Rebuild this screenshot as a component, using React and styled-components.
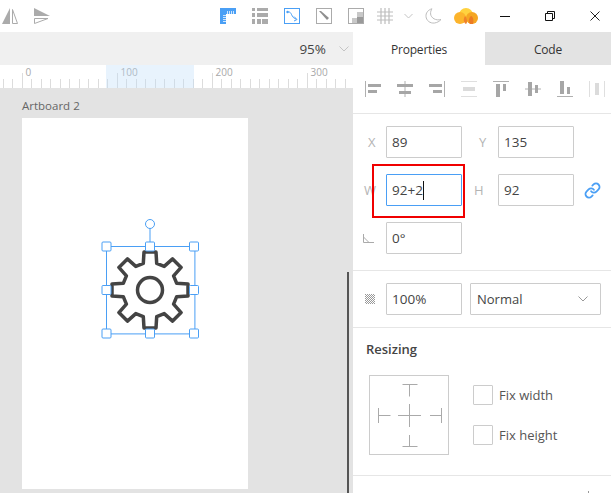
import React from "react";
import styled, { createGlobalStyle } from "styled-components";
import { Link as LinkIcon } from "lucide-react";

const BLUE = "#4a9ff5";
const GREY = "#ababab";

const GlobalStyle = createGlobalStyle`
  html, body {
    margin: 0;
    padding: 0;
    background: #fff;
    overflow: hidden;
  }
  * {
    box-sizing: border-box;
  }
`;

const Page = styled.div`
  width: 611px;
  height: 493px;
  display: flex;
  flex-direction: column;
  overflow: hidden;
  font-family: "Open Sans", "Noto Sans", sans-serif;
  font-size: 13px;
  color: #444;
  background: #fff;
`;

const Toolbar = styled.header`
  height: 32px;
  flex: none;
  display: flex;
  align-items: center;
  padding-left: 2px;
`;

const ToolIcon = styled.svg`
  display: block;
  flex: none;
  width: ${(p) => p.$w || 16}px;
  height: 16px;
  margin-left: ${(p) => p.$gap || 0}px;
`;

const Body = styled.div`
  flex: 1;
  display: flex;
  min-height: 0;
`;

const LeftColumn = styled.main`
  width: 353px;
  flex: none;
  display: flex;
  flex-direction: column;
`;

const ZoomBar = styled.div`
  height: 33px;
  flex: none;
  background: #f0f0f0;
  display: flex;
  align-items: center;
  justify-content: flex-end;
  padding-right: 4px;
  color: #444;
  font-size: 13.5px;
`;

const ZoomChevron = styled.svg`
  width: 10px;
  height: 6px;
  margin-left: 13px;
`;

const Ruler = styled.div`
  position: relative;
  height: 23px;
  flex: none;
  background: #fff;
  overflow: hidden;
  display: flex;
  align-items: flex-end;
  padding-left: 2.5px;
`;

const RulerSelection = styled.div`
  position: absolute;
  left: 106px;
  top: 0;
  bottom: 0;
  width: 88px;
  background: rgba(190, 220, 250, 0.35);
`;

const TickSlot = styled.div`
  position: relative;
  width: 9.5px;
  flex: none;
  height: ${(p) => (p.$major ? 15 : 9)}px;
  border-left: 1.5px solid #dcdcdc;
`;

const TickLabel = styled.span`
  position: absolute;
  left: 3px;
  top: -8px;
  font-size: 10px;
  line-height: 14px;
  color: #a8a8a8;
`;

const Canvas = styled.div`
  position: relative;
  flex: 1;
  background: #e3e3e3;
  padding: 10px 0 4px 22px;
  display: flex;
  flex-direction: column;
  min-height: 0;
`;

const ArtboardTitle = styled.div`
  font-size: 11.5px;
  line-height: 16px;
  color: #666;
  margin-bottom: 4px;
`;

const Artboard = styled.div`
  position: relative;
  width: 226px;
  flex: 1;
  background: #fff;
`;

const SelectionSvg = styled.svg`
  position: absolute;
  left: 78px;
  top: 100px;
`;

const Scrollbar = styled.div`
  position: absolute;
  left: 347px;
  top: 184px;
  bottom: 0;
  width: 2px;
  background: #555;
`;

const Panel = styled.aside`
  flex: 1;
  display: flex;
  flex-direction: column;
  background: #fff;
`;

const Tabs = styled.div`
  height: 33px;
  flex: none;
  display: flex;
`;

const Tab = styled.div`
  width: ${(p) => p.$w}px;
  display: flex;
  align-items: center;
  justify-content: center;
  padding-top: 1px;
  font-size: 12px;
  font-weight: 500;
  letter-spacing: -0.2px;
  color: #333;
  background: ${(p) => (p.$active ? "#fff" : "#e3e3e3")};
`;

const AlignRow = styled.div`
  height: 49px;
  flex: none;
  display: flex;
  align-items: center;
  gap: 16px;
  padding-left: 12px;
  border-bottom: 1px solid #e6e6e6;
`;

const AlignSvg = styled.svg`
  flex: none;
  width: 16px;
  height: 16px;
  opacity: ${(p) => (p.$faint ? 0.4 : 1)};
`;

const Section = styled.section`
  flex: none;
  padding: ${(p) => p.$pad};
  border-bottom: 1px solid #e6e6e6;
`;

const FieldGrid = styled.div`
  display: flex;
  flex-direction: column;
  gap: 16px;
`;

const FieldRow = styled.div`
  display: flex;
  align-items: center;
`;

const FieldLabel = styled.span`
  width: ${(p) => p.$w || 18}px;
  flex: none;
  padding-left: ${(p) => p.$pad || 0}px;
  margin-left: ${(p) => p.$shift || 0}px;
  font-size: 13px;
  color: #b4b4b4;
`;

const FieldBox = styled.div`
  position: relative;
  width: ${(p) => p.$w || 76}px;
  height: 32px;
  flex: none;
  display: flex;
  align-items: center;
  padding-left: 5px;
  font-size: 13.5px;
  color: #444;
  border: 1px solid ${(p) => (p.$focus ? BLUE : "#ccc")};
  border-radius: 1px;
`;

const Caret = styled.span`
  display: inline-block;
  width: 1px;
  height: 19px;
  background: #111;
`;

const RedFrame = styled.div`
  position: absolute;
  left: -15px;
  right: -4px;
  top: -11px;
  bottom: -13px;
  border: 2px solid #f00000;
`;

const LinkWrap = styled.div`
  margin-left: 10px;
  display: flex;
  color: ${BLUE};
`;

const AngleIcon = styled.svg`
  display: block;
  width: 11px;
  height: 9px;
  margin-left: -5px;
`;

const OpacityIcon = styled.svg`
  flex: none;
  width: 10px;
  height: 10px;
  margin-right: 11px;
`;

const SelectBox = styled(FieldBox)`
  justify-content: space-between;
  padding: 0 12px 0 6px;
  margin-left: 8px;
  font-size: 13px;
`;

const Heading = styled.h3`
  margin: 0 0 17px;
  font-size: 13px;
  line-height: 18px;
  font-weight: 600;
  color: #444;
`;

const ResizeRow = styled.div`
  display: flex;
  align-items: center;
  padding-left: 3px;
`;

const ConstraintBox = styled.div`
  width: 80px;
  height: 80px;
  flex: none;
  border: 1px solid #ccc;
`;

const ConstraintMarks = styled.svg`
  display: block;
  width: 78px;
  height: 78px;
`;

const CheckList = styled.div`
  display: flex;
  flex-direction: column;
  gap: 20px;
  margin-left: 24px;
`;

const CheckRow = styled.label`
  display: flex;
  align-items: center;
  gap: 6px;
  font-size: 13px;
  color: #555;
`;

const CheckBox = styled.span`
  width: 20px;
  height: 20px;
  border: 1px solid #ccc;
  border-radius: 1px;
`;

const CollapsedMark = styled.div`
  width: 1px;
  height: 2px;
  margin: 15px 0 0 235px;
  background: #999;
`;

const MirrorV = () => (
  <ToolIcon viewBox="0 0 16 16">
    <polygon points="0,16 8,16 8,0" fill={GREY} />
    <polygon points="10.5,1.5 15.5,15.5 10.5,15.5" fill="none" stroke={GREY} />
  </ToolIcon>
);

const MirrorH = () => (
  <ToolIcon viewBox="0 0 16 16" $gap={16}>
    <polygon points="0,0 16,8 0,8" fill={GREY} />
    <polygon points="0.5,10.5 14,10.5 0.5,15.5" fill="none" stroke={GREY} />
  </ToolIcon>
);

const RulerTool = () => (
  <ToolIcon viewBox="0 0 16 16" $gap={170}>
    <path d="M0 0H16V6H6V16H0Z" fill={BLUE} />
    <path d="M7.5 3V6M9.5 3V6M11.5 3V6M13.5 3V6M3 7.5H6M3 9.5H6M3 11.5H6M3 13.5H6" stroke="#cfe5fc" strokeWidth="1" />
  </ToolIcon>
);

const TableTool = () => (
  <ToolIcon viewBox="0 0 16 16" $gap={16}>
    <path d="M0 0H3V3H0ZM5 0H16V3H5ZM0 5H3V9H0ZM5 5H16V9H5ZM0 11H3V16H0ZM5 11H9V16H5ZM10 11H16V16H10Z" fill={GREY} />
  </ToolIcon>
);

const PathTool = () => (
  <ToolIcon viewBox="0 0 16 16" $gap={16}>
    <rect x="0.5" y="0.5" width="15" height="15" fill="none" stroke={BLUE} />
    <path d="M4 4C8 3 7 10 12 11" fill="none" stroke={BLUE} />
    <circle cx="3.5" cy="4" r="1.2" fill={BLUE} />
    <path d="M10 8.5L13 11.5L10 13" fill="none" stroke={BLUE} />
  </ToolIcon>
);

const SliceTool = () => (
  <ToolIcon viewBox="0 0 16 16" $gap={16}>
    <rect x="0.5" y="0.5" width="15" height="15" fill="none" stroke={GREY} />
    <path d="M3 3L5 3L13 10L11 12Z" fill="#8f8f8f" />
  </ToolIcon>
);

const MaskTool = () => (
  <ToolIcon viewBox="0 0 16 16" $gap={16}>
    <rect x="0.5" y="0.5" width="15" height="15" fill="none" stroke={GREY} />
    <path d="M9 4H15V15H4V10H9Z" fill="#c8c8c8" />
    <path d="M9 9H15V15H9Z" fill="#9a9a9a" />
  </ToolIcon>
);

const GridTool = () => (
  <ToolIcon viewBox="0 0 16 16" $gap={13}>
    <path d="M4 0V16M8 0V16M12 0V16M0 4H16M0 8H16M0 12H16" stroke="#bdbdbd" strokeWidth="1.2" />
  </ToolIcon>
);

const SmallChevron = () => (
  <ToolIcon viewBox="0 0 9 16" $w={9} $gap={11}>
    <path d="M0.5 6L4.5 10L8.5 6" fill="none" stroke="#c4c4c4" />
  </ToolIcon>
);

const MoonTool = () => (
  <ToolIcon viewBox="0 0 17 16" $w={17} $gap={12}>
    <path d="M7 0.8C3 1.8 0.7 5 1 8.5C1.3 12.5 5 15.6 9.5 15C12 14.7 14.5 13.3 16 11.5C11 13 6 10 5.6 6C5.4 4 6 2.2 7 0.8Z" fill="none" stroke="#bdbdbd" />
  </ToolIcon>
);

const CloudLogo = () => (
  <ToolIcon viewBox="0 0 24 16" $w={24} $gap={12}>
    <circle cx="12" cy="7" r="7" fill="#ffd23f" />
    <circle cx="6" cy="10" r="6" fill="#fcb42c" />
    <circle cx="18" cy="10" r="6" fill="#f5a623" />
    <path d="M12 16C9.5 15 9 11 11 8C13 10 14 14 12 16Z" fill="#f0832a" />
    <path d="M16 16C14 14 14.5 10 17 8C19 8.5 20 12 19 16Z" fill="#ec7b25" />
  </ToolIcon>
);

const WinMin = () => (
  <ToolIcon viewBox="0 0 10 16" $w={10} $gap={22}>
    <path d="M0 8.5H10" stroke="#111" />
  </ToolIcon>
);

const WinRestore = () => (
  <ToolIcon viewBox="0 0 10 16" $w={10} $gap={35}>
    <path d="M0.5 5.5H7.5V12.5H0.5ZM2.5 5.5V3.5H9.5V10.5H7.5" fill="none" stroke="#111" />
  </ToolIcon>
);

const WinClose = () => (
  <ToolIcon viewBox="0 0 10 16" $w={10} $gap={35}>
    <path d="M0.5 3.5L9.5 12.5M9.5 3.5L0.5 12.5" fill="none" stroke="#222" />
  </ToolIcon>
);

const ALIGN_PATHS = [
  { stroke: "M0.5 0V16", fill: "M3 3H16V6H3ZM3 9H12V12H3Z" },
  { stroke: "M8 0V16", fill: "M0 3H16V6H0ZM2 10H14V13H2Z" },
  { stroke: "M15.5 0V16", fill: "M0 3H13V6H0ZM4 9H13V12H4Z" },
  { stroke: "M0 0.5H16M0 15.5H16", fill: "M2 6H14V10H2Z", faint: true },
  { stroke: "M0 0.5H16", fill: "M3 3H7V16H3ZM10 3H13V10H10Z" },
  { stroke: "M0 8H16", fill: "M3 1H7V15H3ZM10 4H13V12H10Z" },
  { stroke: "M0 15.5H16", fill: "M3 0H7V13H3ZM10 6H13V13H10Z" },
  { stroke: "M0.5 0V16M15.5 0V16", fill: "M6 2H10V14H6Z", faint: true },
];

const AlignIcon = ({ stroke, fill, faint }) => (
  <AlignSvg viewBox="0 0 16 16" $faint={faint}>
    <path d={stroke} stroke="#b0b0b0" fill="none" />
    <path d={fill} fill="#a6a6a6" />
  </AlignSvg>
);

// gear outline, 8 teeth round the centre
const gearPoints = () => {
  const pts = [];
  for (let i = 0; i < 8; i++) {
    const a = i * 45;
    [
      [-14, 27.5],
      [-9, 38.5],
      [9, 38.5],
      [14, 27.5],
    ].forEach(([off, r]) => {
      const t = ((a + off - 90) * Math.PI) / 180;
      pts.push(`${(50 + r * Math.cos(t)).toFixed(1)},${(72 + r * Math.sin(t)).toFixed(1)}`);
    });
  }
  return pts.join(" ");
};

const HANDLES = [
  [6.5, 28.5],
  [50, 28.5],
  [94, 28.5],
  [6.5, 72],
  [94, 72],
  [6.5, 115.5],
  [50, 115.5],
  [94, 115.5],
];

const GearSelection = () => (
  <SelectionSvg width="100" height="124" viewBox="0 0 100 124">
    <polygon points={gearPoints()} fill="none" stroke="#444" strokeWidth="3.5" strokeLinejoin="round" />
    <circle cx="50" cy="72" r="12.5" fill="none" stroke="#444" strokeWidth="3.5" />
    <rect x="6.5" y="28.5" width="88.4" height="87.4" fill="none" stroke={BLUE} />
    <path d="M50 10V24" stroke={BLUE} />
    <circle cx="50" cy="6" r="4.5" fill="#fff" stroke={BLUE} />
    {HANDLES.map(([x, y]) => (
      <rect key={`${x}-${y}`} x={x - 4.5} y={y - 4.5} width="9" height="9" rx="1" fill="#fff" stroke={BLUE} />
    ))}
  </SelectionSvg>
);

const ticks = Array.from({ length: 37 }, (_, i) => i - 2);

function App() {
  return (
    <Page>
      <GlobalStyle />
      <Toolbar>
        <MirrorV />
        <MirrorH />
        <RulerTool />
        <TableTool />
        <PathTool />
        <SliceTool />
        <MaskTool />
        <GridTool />
        <SmallChevron />
        <MoonTool />
        <CloudLogo />
        <WinMin />
        <WinRestore />
        <WinClose />
      </Toolbar>
      <Body>
        <LeftColumn>
          <ZoomBar>
            95%
            <ZoomChevron viewBox="0 0 10 6">
              <path d="M0.5 0.5L5 5L9.5 0.5" fill="none" stroke="#c4c4c4" />
            </ZoomChevron>
          </ZoomBar>
          <Ruler>
            {ticks.map((t) => (
              <TickSlot key={t} $major={t % 10 === 0}>
                {t % 10 === 0 && <TickLabel>{t * 10}</TickLabel>}
              </TickSlot>
            ))}
            <RulerSelection />
          </Ruler>
          <Canvas>
            <ArtboardTitle>Artboard 2</ArtboardTitle>
            <Artboard>
              <GearSelection />
            </Artboard>
            <Scrollbar />
          </Canvas>
        </LeftColumn>
        <Panel>
          <Tabs>
            <Tab $active $w={132}>Properties</Tab>
            <Tab $w={126}>Code</Tab>
          </Tabs>
          <AlignRow>
            {ALIGN_PATHS.map((a) => (
              <AlignIcon key={a.stroke + a.fill} {...a} />
            ))}
          </AlignRow>
          <Section $pad="12px 0 16px 15px">
            <FieldGrid>
              <FieldRow>
                <FieldLabel>X</FieldLabel>
                <FieldBox>89</FieldBox>
                <FieldLabel $w={36} $pad={17}>Y</FieldLabel>
                <FieldBox>135</FieldBox>
              </FieldRow>
              <FieldRow>
                <FieldLabel $w={22} $shift={-4}>W</FieldLabel>
                <FieldBox $focus>
                  92+2
                  <Caret />
                  <RedFrame />
                </FieldBox>
                <FieldLabel $w={36} $pad={12}>H</FieldLabel>
                <FieldBox>92</FieldBox>
                <LinkWrap>
                  <LinkIcon size={17} strokeWidth={2.5} />
                </LinkWrap>
              </FieldRow>
              <FieldRow>
                <FieldLabel>
                  <AngleIcon viewBox="0 0 11 9">
                    <path d="M0.5 0V8.5H11M0.5 3L6 8.5" fill="none" stroke="#aaa" />
                  </AngleIcon>
                </FieldLabel>
                <FieldBox>0°</FieldBox>
              </FieldRow>
            </FieldGrid>
          </Section>
          <Section $pad="12px 0 12px 12px">
            <FieldRow>
              <OpacityIcon viewBox="0 0 10 10">
                <defs>
                  <pattern id="chk" width="2" height="2" patternUnits="userSpaceOnUse">
                    <rect width="1" height="1" fill="#999" />
                    <rect x="1" y="1" width="1" height="1" fill="#999" />
                  </pattern>
                </defs>
                <rect width="10" height="10" fill="url(#chk)" />
              </OpacityIcon>
              <FieldBox>100%</FieldBox>
              <SelectBox $w={131}>
                Normal
                <svg width="10" height="6" viewBox="0 0 10 6">
                  <path d="M0.5 0.5L5 5L9.5 0.5" fill="none" stroke="#999" />
                </svg>
              </SelectBox>
            </FieldRow>
          </Section>
          <Section $pad="12px 0 20px 13px">
            <Heading>Resizing</Heading>
            <ResizeRow>
              <ConstraintBox>
                <ConstraintMarks viewBox="0 0 78 78">
                  <path
                    d="M32.5 8.5H47.5M39.5 8.5V20.5M8.5 32V47M8.5 39.5H20.5M71.5 32V47M60 39.5H71.5M32.5 70.5H47.5M39.5 59V70.5M28 39.5H51M39.5 28V51"
                    fill="none"
                    stroke="#aaa"
                  />
                </ConstraintMarks>
              </ConstraintBox>
              <CheckList>
                <CheckRow>
                  <CheckBox />
                  Fix width
                </CheckRow>
                <CheckRow>
                  <CheckBox />
                  Fix height
                </CheckRow>
              </CheckList>
            </ResizeRow>
          </Section>
          <CollapsedMark />
        </Panel>
      </Body>
    </Page>
  );
}

export default App;
